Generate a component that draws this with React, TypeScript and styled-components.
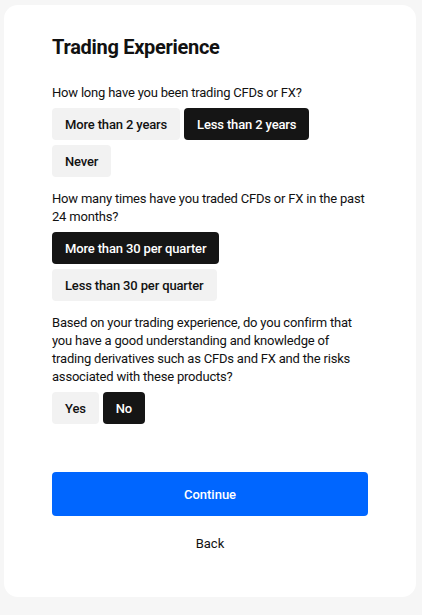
import React, { useState } from "react";
import styled, { createGlobalStyle } from "styled-components";

const GlobalStyle = createGlobalStyle`
  html, body {
    margin: 0;
    padding: 0;
    background: #f6f6f6;
  }
  body {
    font-family: Roboto, "Noto Sans", sans-serif;
    color: #111111;
    -webkit-font-smoothing: antialiased;
  }
  * { box-sizing: border-box; }
`;

const Page = styled.div`
  padding: 5px 6px 19px 4px;
`;

const Card = styled.div`
  background: #ffffff;
  border-radius: 14px;
  padding: 30px 48px 44px 48px;
  display: flex;
  flex-direction: column;
`;

const Title = styled.h1`
  margin: 0 0 25px 0;
  font-size: 20px;
  line-height: 24px;
  font-weight: 700;
  letter-spacing: -0.3px;
  color: #111111;
`;

const Sections = styled.div`
  display: flex;
  flex-direction: column;
  gap: 13px;
`;

const Section = styled.div`
  display: flex;
  flex-direction: column;
  gap: 6px;
`;

const Question = styled.p`
  margin: 0;
  font-size: 13px;
  line-height: 18px;
  font-weight: 400;
  letter-spacing: -0.2px;
  color: #111111;
`;

const Options = styled.div`
  display: flex;
  flex-wrap: wrap;
  column-gap: 4px;
  row-gap: 5px;
`;

const Option = styled.button<{ $selected?: boolean }>`
  height: 32px;
  padding: 0 13px;
  border: none;
  border-radius: 4px;
  font-family: inherit;
  font-size: 13px;
  font-weight: 500;
  letter-spacing: -0.15px;
  cursor: pointer;
  background: ${(p) => (p.$selected ? "#151515" : "#f2f2f2")};
  color: ${(p) => (p.$selected ? "#ffffff" : "#111111")};
`;

const Actions = styled.div`
  margin-top: 48px;
  display: flex;
  flex-direction: column;
  align-items: stretch;
  gap: 18px;
`;

const PrimaryButton = styled.button`
  height: 44px;
  border: none;
  border-radius: 4px;
  background: #0066ff;
  color: #ffffff;
  font-family: inherit;
  font-size: 13px;
  font-weight: 500;
  cursor: pointer;
`;

const LinkButton = styled.button`
  border: none;
  background: transparent;
  padding: 0;
  height: 18px;
  line-height: 18px;
  margin-top: 1px;
  font-family: inherit;
  font-size: 13px;
  font-weight: 400;
  color: #111111;
  cursor: pointer;
`;

type Q = { question: string; options: string[]; initial: number };

const questions: Q[] = [
  {
    question: "How long have you been trading CFDs or FX?",
    options: ["More than 2 years", "Less than 2 years", "Never"],
    initial: 1,
  },
  {
    question: "How many times have you traded CFDs or FX in the past 24 months?",
    options: ["More than 30 per quarter", "Less than 30 per quarter"],
    initial: 0,
  },
  {
    question:
      "Based on your trading experience, do you confirm that you have a good understanding and knowledge of trading derivatives such as CFDs and FX and the risks associated with these products?",
    options: ["Yes", "No"],
    initial: 1,
  },
];

export default function App() {
  const [answers, setAnswers] = useState<number[]>(questions.map((q) => q.initial));
  return (
    <>
      <GlobalStyle />
      <Page>
        <Card>
          <Title>Trading Experience</Title>
          <Sections>
            {questions.map((q, qi) => (
              <Section key={qi}>
                <Question>{q.question}</Question>
                <Options>
                  {q.options.map((o, oi) => (
                    <Option
                      key={o}
                      $selected={answers[qi] === oi}
                      onClick={() =>
                        setAnswers((a) => a.map((v, i) => (i === qi ? oi : v)))
                      }
                    >
                      {o}
                    </Option>
                  ))}
                </Options>
              </Section>
            ))}
          </Sections>
          <Actions>
            <PrimaryButton>Continue</PrimaryButton>
            <LinkButton>Back</LinkButton>
          </Actions>
        </Card>
      </Page>
    </>
  );
}
